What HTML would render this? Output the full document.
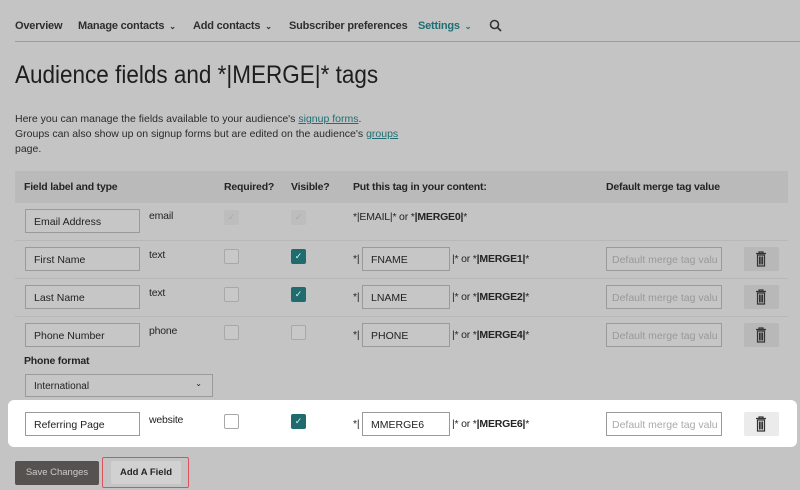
<!DOCTYPE html>
<html><head><meta charset="utf-8"><style>
*{margin:0;padding:0;box-sizing:border-box}
body{width:800px;height:490px;background:#c4c4c4;font-family:"Liberation Sans",sans-serif;color:#242424;position:relative;overflow:hidden}
.a{position:absolute;white-space:nowrap}
.nav{top:20px;font-size:11px;font-weight:bold;color:#2e2e2e;letter-spacing:-0.2px}
.car{font-size:8px;margin-left:5px}
.inp{position:absolute;height:24px;border:1px solid #9a9a9a;background:#c6c6c6;font-size:10.5px;padding:6px 0 0 8px;color:#222;white-space:nowrap;overflow:hidden}
.cb{position:absolute;width:15px;height:15px;border:1px solid #a8a8a8;border-radius:2px;background:#c8c8c8}
.on{background:#1f6b6e;border-color:#1f6b6e;color:#cfe;font-size:9px;text-align:center;line-height:13px}
.dis{background:#bdbdbd;border-color:#bdbdbd;color:#aaa;font-size:9px;text-align:center;line-height:13px}
.trash{position:absolute;left:744px;width:35px;height:24px;background:#b8b8b8;border-radius:2px}
.t{font-size:10.5px;letter-spacing:-0.2px}
.sep{position:absolute;left:15px;width:773px;height:1px;background:#b8b8b8}
</style></head><body>
<div class="a nav" style="left:15px">Overview</div>
<div class="a nav" style="left:78px">Manage contacts<span class="car">⌄</span></div>
<div class="a nav" style="left:193px">Add contacts<span class="car">⌄</span></div>
<div class="a nav" style="left:289px">Subscriber preferences</div>
<div class="a nav" style="left:418px;color:#1e6e73">Settings<span class="car">⌄</span></div>
<svg class="a" style="left:489px;top:19px" width="13" height="13" viewBox="0 0 13 13"><circle cx="5.5" cy="5.5" r="4" fill="none" stroke="#333" stroke-width="1.6"/><path d="M8.5 8.5L12 12" stroke="#333" stroke-width="1.6"/></svg>
<div class="a" style="left:15px;top:41px;width:785px;height:1px;background:#9c9c9c"></div>
<div class="a" style="left:15px;top:61px;font-size:25px;color:#1e1e1e;transform:scaleX(0.9);transform-origin:left top">Audience fields and *|MERGE|* tags</div>
<div class="a" style="left:15px;top:112px;font-size:10.5px;line-height:15px;color:#2a2a2a">Here you can manage the fields available to your audience's <u style="color:#1e6e73">signup forms</u>.<br>Groups can also show up on signup forms but are edited on the audience's <u style="color:#1e6e73">groups</u><br>page.</div>

<div class="a" style="left:15px;top:171px;width:773px;height:32px;background:#bababa"></div>
<div class="a t" style="left:24px;top:181px;font-weight:bold">Field label and type</div>
<div class="a t" style="left:224px;top:181px;font-weight:bold">Required?</div>
<div class="a t" style="left:291px;top:181px;font-weight:bold">Visible?</div>
<div class="a t" style="left:353px;top:181px;font-weight:bold">Put this tag in your content:</div>
<div class="a t" style="left:606px;top:181px;font-weight:bold">Default merge tag value</div>

<div class="inp" style="left:25px;top:209px;width:115px">Email Address</div>
<div class="a t" style="left:149px;top:210px">email</div>
<div class="cb dis" style="left:224px;top:210px">✓</div>
<div class="cb dis" style="left:291px;top:210px">✓</div>
<div class="a t" style="left:353px;top:211px">*|EMAIL|* or *<b>|MERGE0|</b>*</div>
<div class="sep" style="top:240px"></div>

<div class="inp" style="left:25px;top:247px;width:115px">First Name</div>
<div class="a t" style="left:149px;top:249px">text</div>
<div class="cb" style="left:224px;top:249px"></div>
<div class="cb on" style="left:291px;top:249px">✓</div>
<div class="a t" style="left:353px;top:253px">*|</div>
<div class="inp" style="left:362px;top:247px;width:88px">FNAME</div>
<div class="a t" style="left:452px;top:253px">|* or *<b>|MERGE1|</b>*</div>
<div class="inp" style="left:606px;top:247px;width:116px;color:#999;padding-left:5px">Default merge tag valu</div>
<div class="trash" style="top:247px"></div>
<div class="sep" style="top:278px"></div>

<div class="inp" style="left:25px;top:285px;width:115px">Last Name</div>
<div class="a t" style="left:149px;top:287px">text</div>
<div class="cb" style="left:224px;top:287px"></div>
<div class="cb on" style="left:291px;top:287px">✓</div>
<div class="a t" style="left:353px;top:291px">*|</div>
<div class="inp" style="left:362px;top:285px;width:88px">LNAME</div>
<div class="a t" style="left:452px;top:291px">|* or *<b>|MERGE2|</b>*</div>
<div class="inp" style="left:606px;top:285px;width:116px;color:#999;padding-left:5px">Default merge tag valu</div>
<div class="trash" style="top:285px"></div>
<div class="sep" style="top:316px"></div>

<div class="inp" style="left:25px;top:323px;width:115px">Phone Number</div>
<div class="a t" style="left:149px;top:325px">phone</div>
<div class="cb" style="left:224px;top:325px"></div>
<div class="cb" style="left:291px;top:325px"></div>
<div class="a t" style="left:353px;top:329px">*|</div>
<div class="inp" style="left:362px;top:323px;width:88px">PHONE</div>
<div class="a t" style="left:452px;top:329px">|* or *<b>|MERGE4|</b>*</div>
<div class="inp" style="left:606px;top:323px;width:116px;color:#999;padding-left:5px">Default merge tag valu</div>
<div class="trash" style="top:323px"></div>
<div class="a t" style="left:24px;top:355px;font-weight:bold">Phone format</div>
<div class="inp" style="left:25px;top:374px;width:188px;height:23px;font-size:10px">International<span style="position:absolute;right:10px;top:4px;font-size:8px">⌄</span></div>

<div class="a" style="left:8px;top:400px;width:789px;height:47px;background:#fff;border-radius:6px"></div>
<div class="inp" style="left:25px;top:412px;width:115px;background:#fff">Referring Page</div>
<div class="a t" style="left:149px;top:414px">website</div>
<div class="cb" style="left:224px;top:414px;background:#fff"></div>
<div class="cb on" style="left:291px;top:414px">✓</div>
<div class="a t" style="left:353px;top:418px">*|</div>
<div class="inp" style="left:362px;top:412px;width:88px;background:#fff">MMERGE6</div>
<div class="a t" style="left:452px;top:418px">|* or *<b>|MERGE6|</b>*</div>
<div class="inp" style="left:606px;top:412px;width:116px;background:#fff;color:#aaa;padding-left:5px">Default merge tag valu</div>
<div class="trash" style="top:412px;background:#ebebeb"></div>

<svg class="a" style="left:755px;top:251px" width="12" height="16" viewBox="0 0 12 16"><path d="M1 2.5h10M4 2.5V1h4v1.5M2.5 4h7v11h-7zM4.5 5.5v8M6 5.5v8M7.5 5.5v8" fill="none" stroke="#333" stroke-width="1.2"/></svg>
<svg class="a" style="left:755px;top:289px" width="12" height="16" viewBox="0 0 12 16"><path d="M1 2.5h10M4 2.5V1h4v1.5M2.5 4h7v11h-7zM4.5 5.5v8M6 5.5v8M7.5 5.5v8" fill="none" stroke="#333" stroke-width="1.2"/></svg>
<svg class="a" style="left:755px;top:327px" width="12" height="16" viewBox="0 0 12 16"><path d="M1 2.5h10M4 2.5V1h4v1.5M2.5 4h7v11h-7zM4.5 5.5v8M6 5.5v8M7.5 5.5v8" fill="none" stroke="#333" stroke-width="1.2"/></svg>
<svg class="a" style="left:755px;top:416px" width="12" height="16" viewBox="0 0 12 16"><path d="M1 2.5h10M4 2.5V1h4v1.5M2.5 4h7v11h-7zM4.5 5.5v8M6 5.5v8M7.5 5.5v8" fill="none" stroke="#333" stroke-width="1.2"/></svg>

<div class="a" style="left:15px;top:461px;width:84px;height:24px;background:#56524f;border-radius:2px;color:#ccc;font-size:9.5px;text-align:center;line-height:24px">Save Changes</div>
<div class="a" style="left:102px;top:457px;width:87px;height:31px;border:1.5px solid #e0505a;border-radius:2px"></div>
<div class="a" style="left:111px;top:461px;width:70px;height:23px;background:#d1d1d1;border-radius:2px;font-size:9.5px;font-weight:bold;text-align:center;line-height:23px">Add A Field</div>
</body></html>
